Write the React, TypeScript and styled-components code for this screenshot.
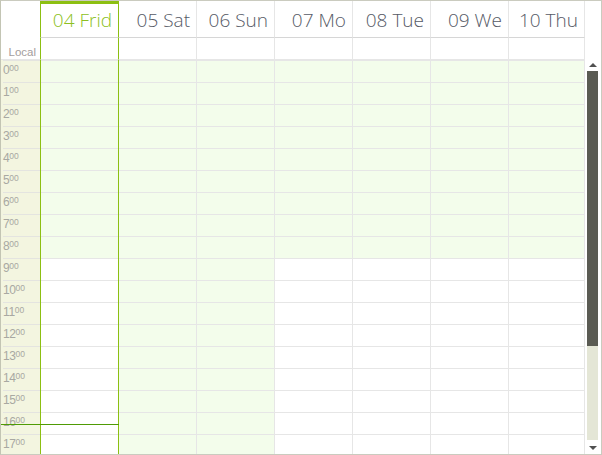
import React from "react";
import styled, { createGlobalStyle } from "styled-components";

const GlobalStyle = createGlobalStyle`
  html, body {
    margin: 0;
    padding: 0;
    background: #ffffff;
  }
  body {
    font-family: "Liberation Sans", Arial, sans-serif;
  }
`;

const days = [
  { label: "04 Frid", weekend: false },
  { label: "05 Sat", weekend: true },
  { label: "06 Sun", weekend: true },
  { label: "07 Mo", weekend: false },
  { label: "08 Tue", weekend: false },
  { label: "09 We", weekend: false },
  { label: "10 Thu", weekend: false },
];

const SELECTED = 0;
const ROW_H = 22;
const TOTAL_HOURS = 24;
const BODY_H = 394;
// only the rows that fit in the viewport are drawn
const HOURS = Array.from({ length: Math.ceil(BODY_H / ROW_H) }, (_, i) => i);
const NOW_MINUTES = 16 * 60 + 33;
const TRACK_H = BODY_H - 11 - 14;

const GREEN = "#8cbf12";
const LINE = "#e6e6e6";
const COLUMNS = "39px repeat(6, 78px) 77px 16px";

const isOffHours = (hour: number, weekend: boolean) => weekend || hour < 9 || hour >= 18;

const Scheduler = styled.div`
  width: 602px;
  height: 455px;
  box-sizing: border-box;
  border: 1px solid #cacbbf;
  border-left-color: #c3c5b4;
  display: grid;
  grid-template-rows: 37px 22px 1fr;
  overflow: hidden;
  background: #ffffff;
`;

const HeaderRow = styled.div`
  display: grid;
  grid-template-columns: ${COLUMNS};
`;

const Blank = styled.div`
  background: #ffffff;
`;

const DayHeader = styled.div<{ $selected: boolean; $edge: boolean; $last: boolean }>`
  box-sizing: border-box;
  display: flex;
  align-items: center;
  justify-content: flex-end;
  padding: ${(p) => (p.$selected ? "0" : "3px")} 6px 0 0;
  border-top: ${(p) => (p.$selected ? `3px solid ${GREEN}` : "none")};
  border-left: 1px solid ${(p) => (p.$edge ? GREEN : LINE)};
  border-right: ${(p) => (p.$last ? `1px solid ${LINE}` : "none")};
  border-bottom: 1px solid #d6d6d6;
  overflow: hidden;
  white-space: nowrap;
  font-family: "Open Sans", "Liberation Sans", sans-serif;
  font-weight: 300;
  font-size: 19px;
  line-height: 33px;
  color: ${(p) => (p.$selected ? "#8dbf22" : "#565a66")};
`;

const LocalCell = styled.div`
  box-sizing: border-box;
  display: flex;
  align-items: flex-end;
  justify-content: flex-end;
  padding-right: 4px;
  border-bottom: 1px solid ${LINE};
  font-size: 11.5px;
  line-height: 14px;
  color: #a39d9d;
`;

const AllDayCell = styled.div<{ $edge: boolean; $last: boolean }>`
  box-sizing: border-box;
  border-left: 1px solid ${(p) => (p.$edge ? GREEN : LINE)};
  border-right: ${(p) => (p.$last ? `1px solid ${LINE}` : "none")};
  border-bottom: 1px solid ${LINE};
`;

const Body = styled.div`
  display: flex;
  min-height: 0;
`;

const Grid = styled.div`
  position: relative;
  flex: 1;
  display: grid;
  grid-template-columns: 39px repeat(6, 78px) 77px;
  align-items: start;
  overflow: hidden;
`;

const TimeColumn = styled.div`
  padding-left: 2px;
  background: #f3f5e0;
`;

const HourLabel = styled.div`
  box-sizing: border-box;
  height: ${ROW_H}px;
  border-top: 1px solid #e4e4e0;
  font-size: 12px;
  letter-spacing: -0.4px;
  line-height: 14px;
  color: #a8a8a2;
`;

const Minutes = styled.span`
  font-size: 8.5px;
  letter-spacing: 0;
  vertical-align: 3px;
`;

const DayColumn = styled.div<{ $edge: boolean; $last: boolean }>`
  box-sizing: border-box;
  border-left: 1px solid ${(p) => (p.$edge ? GREEN : LINE)};
  border-right: ${(p) => (p.$last ? `1px solid ${LINE}` : "none")};
`;

const HourCell = styled.div<{ $off: boolean }>`
  box-sizing: border-box;
  height: ${ROW_H}px;
  border-top: 1px solid ${LINE};
  background: ${(p) => (p.$off ? "#f3fdeb" : "#ffffff")};
`;

const NowLine = styled.div`
  position: absolute;
  left: 0;
  width: 118px;
  height: 1px;
  background: #4f9b05;
`;

const ScrollBar = styled.div`
  width: 16px;
  box-sizing: border-box;
  padding: 0 3px 0 2px;
  display: flex;
  flex-direction: column;
  background: #ffffff;
`;

const ArrowButton = styled.div<{ $height: number }>`
  height: ${(p) => p.$height}px;
  display: flex;
  align-items: center;
  justify-content: center;
`;

const Arrow = styled.div<{ $down?: boolean }>`
  width: 0;
  height: 0;
  border-left: 4px solid transparent;
  border-right: 4px solid transparent;
  ${(p) => (p.$down ? "border-top: 4px solid #505050;" : "border-bottom: 4px solid #505050;")}
  margin-top: ${(p) => (p.$down ? "2px" : "-1px")};
`;

const Track = styled.div`
  flex: 1;
  background: #e4e6d6;
`;

const Thumb = styled.div`
  background: #5a5b53;
`;

const App: React.FC = () => {
  const thumbHeight = Math.round((TRACK_H * BODY_H) / (TOTAL_HOURS * ROW_H));
  const nowTop = (NOW_MINUTES / 60) * ROW_H;

  return (
    <>
      <GlobalStyle />
      <Scheduler>
        <HeaderRow>
          <Blank />
          {days.map((d, i) => (
            <DayHeader
              key={d.label}
              $selected={i === SELECTED}
              $edge={i === SELECTED || i === SELECTED + 1}
              $last={i === days.length - 1}
            >
              {d.label}
            </DayHeader>
          ))}
          <Blank />
        </HeaderRow>

        <HeaderRow>
          <LocalCell>Local</LocalCell>
          {days.map((d, i) => (
            <AllDayCell
              key={d.label}
              $edge={i === SELECTED || i === SELECTED + 1}
              $last={i === days.length - 1}
            />
          ))}
          <Blank />
        </HeaderRow>

        <Body>
          <Grid>
            <TimeColumn>
              {HOURS.map((h) => (
                <HourLabel key={h}>
                  {h}
                  <Minutes>00</Minutes>
                </HourLabel>
              ))}
            </TimeColumn>
            {days.map((d, i) => (
              <DayColumn
                key={d.label}
                $edge={i === SELECTED || i === SELECTED + 1}
                $last={i === days.length - 1}
              >
                {HOURS.map((h) => (
                  <HourCell key={h} $off={isOffHours(h, d.weekend)} />
                ))}
              </DayColumn>
            ))}
            <NowLine style={{ top: nowTop }} />
          </Grid>

          <ScrollBar>
            <ArrowButton $height={11}>
              <Arrow />
            </ArrowButton>
            <Track>
              <Thumb style={{ height: thumbHeight }} />
            </Track>
            <ArrowButton $height={14}>
              <Arrow $down />
            </ArrowButton>
          </ScrollBar>
        </Body>
      </Scheduler>
    </>
  );
};

export default App;
